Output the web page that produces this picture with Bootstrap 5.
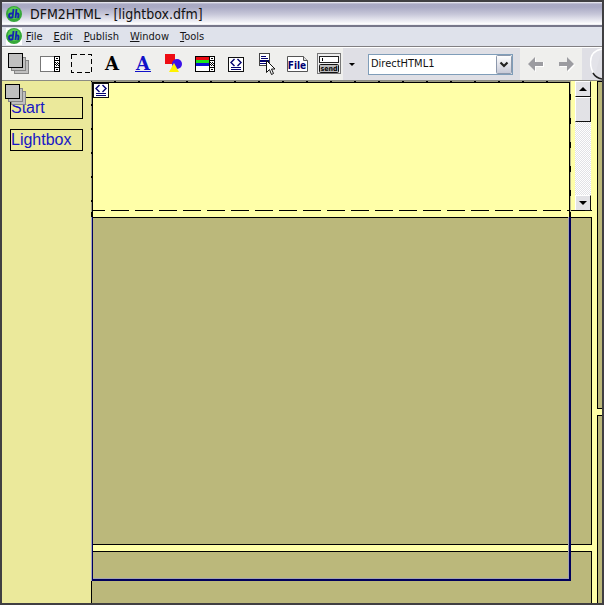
<!DOCTYPE html>
<html lang="en">
<head>
<meta charset="utf-8">
<meta name="viewport" content="width=device-width, initial-scale=1">
<title>DFM2HTML - [lightbox.dfm]</title>
<link href="https://cdn.jsdelivr.net/npm/bootstrap@5.3.0/dist/css/bootstrap.min.css" rel="stylesheet">
<style>
body{font-family:"DejaVu Sans Condensed","DejaVu Sans",sans-serif;font-size:11px;line-height:16px;color:#111}
button{border:0;padding:0;background:none;color:inherit}
svg{display:block}
.app-window{border:2px solid #403f42;background:#ffffa8}
.title-bar{height:25px;background:linear-gradient(#f4f4f8 0,#aaaac4 2px,#a9a9c4 5px,#c6c6d8 12px,#ececf3 19px,#fff 22px,#e0e0e8 23px);border-bottom:2px solid #77778a}
.title-bar h1{font-size:14px;line-height:24px;font-weight:400}
.menu-bar{height:20px;background:#dfe2eb;border-bottom:1px solid #817f82}
.menu-bar a{color:#151518;text-decoration:none}
.menu-links{gap:11px}
.tool-bar{height:34px;background:#dfdfe5;border-top:1px solid #fff;border-bottom:1px solid #8b8b83}
.tools{background:#efefed}
.tool{width:31px;height:32px}
.more{width:16px;height:32px}
.combo{width:145px;margin-left:5px}
.combo select{appearance:none;width:100%;height:21px;padding:0 20px 0 2px;border:1px solid #7f9db9;border-radius:0;background:#fff;color:#111;font:inherit}
.combo svg{top:1px;right:1px}
.history{margin-left:7px;background:#efefed;width:62px}
.round{margin-left:8px;width:12px}
.side{width:89px;background:#ebe99b;padding:16px 8px}
.side a{height:22px;border:1px solid #000;color:#1717c5;text-decoration:none;font:16px/20px "Liberation Sans",Arial,sans-serif;margin-bottom:10px}
.stack-icon{left:3px;top:3px}
.sheet{flex:0 1 501px}
.head-part{height:130px}
.panel{background:#bbb87b;border:1px solid #000}
.panel-main{margin-top:6px}
.panel-last{height:52px;margin-top:6px;border-bottom:0}
.far{width:5px;margin-left:5px}
.far .panel{border-right:0}
.far .top-box{height:328px}
.far .low-box{margin-top:6px;border-bottom:0}
.scroller{width:16px;margin-right:1px;background:repeating-conic-gradient(#e2e2e6 0 25%,#fff 0 50%) 0 0/2px 2px}
.scroller button{width:16px;background:#e2e2e6;border:1px solid;border-color:#fff #111 #111 #fff;flex:none}
.arrow-key{height:16px}
.thumb{height:25px}
.dash-line{left:0;right:0;top:129px;height:1px;background:repeating-linear-gradient(90deg,#000 0 18px,transparent 18px 24px) -4px 0/240px 1px}
.pick{left:0;right:21px;top:0;bottom:22px}
.pick-head{height:130px;border:solid #000;border-width:1px 1px 0;margin:1px 1px 0;flex:none;position:relative}
.edge-top{left:-1px;right:-1px;top:-2px;height:1px;background:linear-gradient(90deg,#9c9c84 22px,#000 22px) 0 0/24px 1px}
.edge-left{left:-2px;top:-2px;bottom:0;width:1px;background:linear-gradient(#9c9c84 22px,#000 22px) 0 1px/1px 24px}
.edge-right{right:-2px;top:-2px;bottom:0;width:1px;background:linear-gradient(#b4b48c 18px,#000 18px) 0 -5px/1px 24px}
.pick-join{height:5px;border:solid #000;border-width:0 2px;flex:none}
.pick-body{border:solid #00005c;border-width:0 2px 2px 1px;margin-left:1px;box-shadow:-1px 0 #a4a4c4,inset -1px -1px #a4a4b4}
.badge-icon{left:2px;top:2px}
</style>
<script defer src="https://cdn.jsdelivr.net/npm/bootstrap@5.3.0/dist/js/bootstrap.bundle.min.js"></script>
</head>
<body>
<svg width="0" height="0" class="position-absolute" aria-hidden="true">
<defs>
<g id="logo"><circle cx="8" cy="8" r="8" fill="#36a83a"/><circle cx="8" cy="7" r="6" fill="#58c951"/><path d="M7.500 3L6.500 12M7 7.500H5Q3 7.500 3 9.500T4 11.500H6.500M10.500 3l-1 9M10 7.500H11.500Q13 7.500 12.500 9L12 12" fill="none" stroke="#1426b0" stroke-width="1.800"/></g>
<g id="layers" fill="#c0c0c0" shape-rendering="crispEdges"><path d="M6.500 7.500h14v13h-14z" stroke="#858585"/><path d="M3.500 4.500h14v13h-14z" stroke="#858585"/><path d="M.5.500h14v14H.5z" stroke="#000"/></g>
<g id="code"><path d="M.5.500h15v14H.5z" fill="#fff" stroke="#111" shape-rendering="crispEdges"/><path d="M6.500 2L3 5.500 6.500 9M9.500 2L13 5.500 9.500 9" fill="none" stroke="#000070" stroke-width="1.400"/><path d="M3 10.500h10M3 12.500h10" stroke="#000070" shape-rendering="crispEdges"/></g>
<g id="bar"><path d="M.5.500h5v15h-5z" fill="#fff" stroke="#000"/><path d="M0 4.500h6M0 11.500h6" stroke="#000"/><path d="M2 2h2v1H2zM2 13h2v1H2zM1 6h1v1H1zM3 6h1v1H3zM2 7h1v1H2zM4 7h1v1H4zM1 8h1v1H1zM3 8h1v1H3zM2 9h1v1H2zM4 9h1v1H4z"/></g>
</defs>
</svg>
<div class="app-window d-flex flex-column min-vh-100 overflow-hidden">
<header>
<div class="title-bar d-flex align-items-center gap-2">
<svg class="ms-1" width="16" height="16" aria-hidden="true"><use href="#logo"/></svg>
<h1 class="m-0 text-nowrap">DFM2HTML - [lightbox.dfm]</h1>
</div>
<nav class="menu-bar d-flex align-items-center" aria-label="Main menu">
<svg class="ms-1 me-1" width="16" height="17" aria-hidden="true"><path d="M0 0h16v17H0z" fill="#fff"/><use href="#logo"/></svg>
<div class="menu-links d-flex">
<a href="#"><u>F</u>ile</a><a href="#"><u>E</u>dit</a><a href="#"><u>P</u>ublish</a><a href="#"><u>W</u>indow</a><a href="#"><u>T</u>ools</a>
</div>
</nav>
<div class="tool-bar d-flex align-items-center" role="toolbar" aria-label="Components">
<div class="tools d-flex">
<button class="tool" aria-label="Panel"><svg width="31" height="32"><use href="#layers" x="6" y="5"/></svg></button>
<button class="tool" aria-label="Scroll panel"><svg width="31" height="32" shape-rendering="crispEdges"><path d="M7.500 8.500h15v15h-15z" fill="#fff" stroke="#777"/><use href="#bar" x="21" y="8"/></svg></button>
<button class="tool" aria-label="Frame"><svg width="31" height="32" shape-rendering="crispEdges"><path d="M7.500 6.500h20v18h-20z" fill="none" stroke="#000" stroke-dasharray="5 3"/></svg></button>
<button class="tool" aria-label="Text"><svg width="31" height="32"><text x="17" y="22" text-anchor="middle" font-family="DejaVu Serif" font-weight="bold" font-size="18">A</text></svg></button>
<button class="tool" aria-label="Link"><svg width="31" height="32"><text x="17" y="22" text-anchor="middle" font-family="DejaVu Serif" font-weight="bold" font-size="18" fill="#1111c8">A</text><path d="M9 23.500h16" stroke="#1111c8"/></svg></button>
<button class="tool" aria-label="Shapes"><svg width="31" height="32"><path d="M8 6h10v10H8z" fill="#ee0c13"/><circle cx="20" cy="16" r="5" fill="#3a10e8"/><path d="M17 15l5 9H12z" fill="#fff200"/></svg></button>
<button class="tool" aria-label="Menu"><svg width="31" height="32" shape-rendering="crispEdges"><path d="M7.500 8.500h15v15h-15z" fill="#fff" stroke="#000"/><path d="M8 9h14v3H8z" fill="#e90b12"/><path d="M8 12h14v3H8z" fill="#1ce01c"/><path d="M8 15h14v3H8z" fill="#0c0cd2"/><use href="#bar" x="21" y="8"/></svg></button>
<button class="tool" aria-label="HTML code"><svg width="31" height="32"><use href="#code" x="9" y="9"/></svg></button>
<button class="tool" aria-label="Popup menu"><svg width="31" height="32"><path d="M9.500 5.500h10v12h-10z" fill="#fff" stroke="#444" shape-rendering="crispEdges"/><path d="M11 8.500h5M11 10.500h7M10 15.500h9" stroke="#000070" shape-rendering="crispEdges"/><path d="M10 12h9v2h-9z" fill="#000070"/><path d="M16.500 12.500v12l3-3 2 5 2-1-2-4.500h3.500z" fill="#fff" stroke="#111"/></svg></button>
<button class="tool" aria-label="File"><svg width="31" height="32"><path d="M6.500 8.500h16l4 4v11h-20z" fill="#fff" stroke="#555"/><path d="M22.500 8.500v4h4" fill="#ddd" stroke="#555"/><text x="16" y="21" text-anchor="middle" font-family="DejaVu Sans Condensed,DejaVu Sans" font-weight="bold" font-size="10" fill="#000070">File</text></svg></button>
<button class="tool" aria-label="Form"><svg width="31" height="32"><path d="M5.500 5.500h23v20h-23z" fill="#eee" stroke="#777" shape-rendering="crispEdges"/><path d="M7.500 8.500h19v6h-19z" fill="#fff" stroke="#222" shape-rendering="crispEdges"/><path d="M10.500 10v3" stroke="#000"/><rect x="7.500" y="16.500" width="19" height="8" rx="1" fill="#bbb" stroke="#111"/><text x="17" y="23" text-anchor="middle" font-family="DejaVu Sans Condensed,DejaVu Sans" font-weight="bold" font-size="7" fill="#000">send</text></svg></button>
</div>
<button class="more ms-1" aria-label="More components"><svg width="16" height="32"><path d="M2 15h6l-3 3z"/></svg></button>
<div class="combo position-relative flex-shrink-0">
<select aria-label="Selected object"><option>DirectHTML1</option></select>
<svg class="position-absolute pe-none" width="16" height="19" aria-hidden="true"><defs><linearGradient id="face" x2="0" y2="1"><stop stop-color="#fff"/><stop offset="1" stop-color="#c6c8d6"/></linearGradient></defs><rect x=".5" y=".5" width="15" height="18" rx="1" fill="url(#face)" stroke="#8c98ac"/><path d="M4.500 7.500l3.500 3.500 3.500-3.500" fill="none" stroke="#222" stroke-width="2.200"/></svg>
</div>
<div class="history d-flex flex-shrink-0">
<button class="tool" aria-label="Back"><svg width="31" height="32"><path d="M9 17l7-7v4h8v5h-8v5z" fill="#fff"/><path d="M8 16l7-7v5h8v4h-8v5z" fill="#9c9ca1"/></svg></button>
<button class="tool" aria-label="Forward"><svg width="31" height="32"><path d="M24 17l-7-7v4H9v5h8v5z" fill="#fff"/><path d="M23 16l-7-7v5H8v4h8v5z" fill="#9c9ca1"/></svg></button>
</div>
<svg class="round flex-shrink-0" height="32" viewBox="0 0 12 32" aria-hidden="true"><path d="M12 1Q.5 3 .5 14Q.5 22 5 27" fill="#e3e3e9" stroke="#fff" stroke-width="1.500"/><path d="M3 25Q6 30 12 31" fill="none" stroke="#222" stroke-width="1.500"/></svg>
</div>
</header>
<main class="d-flex flex-grow-1">
<aside class="side d-flex flex-column position-relative flex-shrink-0">
<a href="#">Start</a><a href="#">Lightbox</a>
<svg class="stack-icon position-absolute" width="22" height="22" aria-hidden="true"><use href="#layers"/></svg>
</aside>
<section class="sheet d-flex flex-column position-relative flex-grow-1" aria-label="Page">
<div class="head-part d-flex justify-content-end">
<div class="scroller d-flex flex-column">
<button class="arrow-key" aria-label="Scroll up"><svg width="14" height="14"><path d="M3 9h8L7 5z"/></svg></button>
<button class="thumb" aria-label="Scroll position"></button>
<button class="arrow-key mt-auto" aria-label="Scroll down"><svg width="14" height="14"><path d="M3 5h8L7 9z"/></svg></button>
</div>
</div>
<div class="panel panel-main flex-grow-1"></div>
<div class="panel panel-last"></div>
<div class="dash-line position-absolute"></div>
<div class="pick position-absolute d-flex flex-column pe-none">
<div class="pick-head"><div class="edge-top position-absolute"></div><div class="edge-left position-absolute"></div><div class="edge-right position-absolute"></div></div>
<div class="pick-join"></div>
<div class="pick-body flex-grow-1"></div>
</div>
<svg class="badge-icon position-absolute" width="16" height="15" aria-hidden="true"><use href="#code"/></svg>
</section>
<aside class="far d-flex flex-column flex-shrink-0" aria-label="Next page">
<div class="panel top-box"></div>
<div class="panel low-box flex-grow-1"></div>
</aside>
</main>
</div>
</body>
</html>
